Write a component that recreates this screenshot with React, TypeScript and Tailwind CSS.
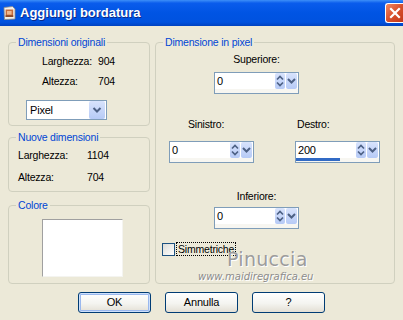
import React from 'react'

function UpDownButton() {
	return (
		<div className="h-[16px] w-[10px] rounded-[2px] bg-[linear-gradient(to_bottom,#d8e3fc,#b6caf6)]">
			<svg width="10" height="16" viewBox="0 0 10 16">
				<path d="M2 6.5 L5 3.5 L8 6.5" fill="none" stroke="#4d6185" strokeWidth="1.7" />
				<path d="M2 9.5 L5 12.5 L8 9.5" fill="none" stroke="#4d6185" strokeWidth="1.7" />
			</svg>
		</div>
	)
}

function DropButton({ w = 11, h = 16 }: { w?: number; h?: number }) {
	return (
		<div
			className="rounded-[2px] bg-[linear-gradient(to_bottom,#d8e3fc,#b6caf6)]"
			style={{ width: w, height: h }}
		>
			<svg width={w} height={h} viewBox={`0 0 ${w} ${h}`}>
				<path
					d={`M${w / 2 - 3.5} ${h / 2 - 2} L${w / 2} ${h / 2 + 1.5} L${w / 2 + 3.5} ${h / 2 - 2}`}
					fill="none"
					stroke="#4d6185"
					strokeWidth="2"
				/>
			</svg>
		</div>
	)
}

function SpinBox({ value, bar }: { value: string; bar?: boolean }) {
	return (
		<div className="flex h-[22px] w-[85px] flex-col border border-[#7f9db9] bg-white">
			<div className="flex h-[16px] pr-[1px]">
				<div className="flex-1 pl-[2px] text-[11px] leading-[16px]">{value}</div>
				<UpDownButton />
				<div className="ml-[1px]">
					<DropButton />
				</div>
			</div>
			<div className="flex-1 bg-[#f7f6f1]">
				{bar && <div className="h-[3px] w-[44px] bg-[#316ac5]" />}
			</div>
		</div>
	)
}

function XpButton({ label, isDefault }: { label: string; isDefault?: boolean }) {
	return (
		<button
			className={`h-[21px] w-[73px] rounded-[3px] border border-[#003c74] bg-[linear-gradient(to_bottom,#ffffff,#f4f4f0_55%,#e3dfd4)] text-[11px] font-normal leading-[19px] ${
				isDefault ? 'shadow-[inset_0_0_0_1px_#cee0fb,inset_0_0_0_2px_#9ab8ee]' : ''
			}`}
		>
			{label}
		</button>
	)
}

function TitleBar() {
	return (
		<div className="flex h-[26px] items-center bg-[linear-gradient(to_bottom,#3d8ff8,#0a5cec_12%,#0054e3_50%,#0052df_85%,#0042c0)]">
			<svg className="ml-[3px]" width="13" height="14" viewBox="0 0 13 14">
				<path d="M1 1.5 L9.5 0.5 L12 3 L12 13 L1.5 13.5 Z" fill="#f4f1ea" stroke="#8a8a8a" strokeWidth="0.8" />
				<rect x="2.6" y="3.5" width="7.6" height="7.5" fill="#c46c3c" />
				<rect x="4" y="5" width="4.6" height="3.6" fill="#f0b78c" />
				<rect x="2.6" y="9.2" width="7.6" height="1.8" fill="#8d4a2a" />
			</svg>
			<span className="ml-[4px] font-['Liberation_Sans',Arial,sans-serif] text-[13px] font-bold tracking-[0px] text-white [text-shadow:1px_1px_0_#0a2a8a]">
				Aggiungi bordatura
			</span>
			<div className="ml-auto mt-[-1px] flex h-[20px] w-[18px] items-center justify-center rounded-l-[3px] border border-r-0 border-white bg-[linear-gradient(135deg,#f08a66,#d9502c_50%,#c2381a)]">
				<svg width="12" height="12" viewBox="0 0 12 12">
					<path d="M2 2 L10 10 M10 2 L2 10" stroke="#ffffff" strokeWidth="2.2" strokeLinecap="square" />
				</svg>
			</div>
		</div>
	)
}

const fieldsetCls = 'rounded-[4px] border border-[#d0d0bf]'
const legendCls = 'ml-[7px] px-[2px] leading-[13px] text-[#0046d5]'

export default function App() {
	return (
		<div className="h-[320px] w-[403px] overflow-hidden bg-[#ece9d8] font-['Liberation_Sans',Arial,sans-serif] text-[10.5px] tracking-[-0.2px] text-black">
			<TitleBar />
			<div className="relative px-[8px] pt-[10px]">
				<div className="flex gap-[5px]">
					{/* left column */}
					<div className="flex w-[142px] flex-col">
						<fieldset className={`${fieldsetCls} pb-[5px]`}>
							<legend className={legendCls}>Dimensioni originali</legend>
							<div className="grid grid-cols-[56px_auto] gap-y-[7px] pl-[33px] pt-[6px] leading-[13px]">
								<span>Larghezza:</span>
								<span>904</span>
								<span>Altezza:</span>
								<span>704</span>
							</div>
							<div className="ml-[17px] mt-[12px] flex h-[20px] w-[81px] items-center border border-[#7f9db9] bg-white pr-[1px]">
								<span className="flex-1 pl-[3px] text-[11px]">Pixel</span>
								<DropButton w={16} h={18} />
							</div>
						</fieldset>

						<fieldset className={`${fieldsetCls} mt-[5px] pb-[7px]`}>
							<legend className={legendCls}>Nuove dimensioni</legend>
							<div className="grid grid-cols-[69px_auto] gap-y-[9px] pl-[9px] pt-[5px] leading-[13px]">
								<span>Larghezza:</span>
								<span>1104</span>
								<span>Altezza:</span>
								<span>704</span>
							</div>
						</fieldset>

						<fieldset className={`${fieldsetCls} mt-[7px] pb-[6px]`}>
							<legend className={legendCls}>Colore</legend>
							<div className="ml-[33px] mt-[7px] h-[58px] w-[81px] border border-t-[#a0a0a0] border-l-[#a0a0a0] border-r-[#f4f4f0] border-b-[#f4f4f0] bg-white" />
						</fieldset>
					</div>

					{/* right column */}
					<fieldset className={`${fieldsetCls} w-[240px]`}>
						<legend className={legendCls}>Dimensione in pixel</legend>
						<div className="ml-[58px] w-[85px] pt-[4px]">
							<div className="text-center leading-[13px]">Superiore:</div>
							<div className="mt-[6px]">
								<SpinBox value="0" />
							</div>
						</div>

						<div className="ml-[13px] mt-[24px] flex gap-[41px]">
							<div className="w-[85px]">
								<div className="pl-[19px] leading-[13px]">Sinistro:</div>
								<div className="mt-[10px]">
									<SpinBox value="0" />
								</div>
							</div>
							<div className="w-[85px]">
								<div className="pl-[2px] leading-[13px]">Destro:</div>
								<div className="mt-[10px]">
									<SpinBox value="200" bar />
								</div>
							</div>
						</div>

						<div className="ml-[58px] mt-[27px] w-[85px]">
							<div className="text-center leading-[13px]">Inferiore:</div>
							<div className="mt-[4px]">
								<SpinBox value="0" />
							</div>
						</div>

						<div className="ml-[6px] mt-[13px] flex items-center">
							<div className="h-[13px] w-[13px] border border-[#1c5180] bg-[linear-gradient(135deg,#dcdcd7,#ffffff)]" />
							<span className="ml-[1px] border border-dotted border-black px-[1px] leading-[12px]">
								Simmetriche
							</span>
						</div>
					</fieldset>
				</div>

				<div className="mt-[8px] flex justify-center gap-[14px]">
					<XpButton label="OK" isDefault />
					<XpButton label="Annulla" />
					<XpButton label="?" />
				</div>

				{/* watermark */}
				<div className="pointer-events-none absolute left-[227px] top-[224px] font-['DejaVu_Sans',sans-serif] text-[19px] leading-none tracking-[0.3px] text-[#9c9c9c] [text-shadow:1px_1px_0_#ffffff]">
					Pinuccia
				</div>
				<div className="pointer-events-none absolute left-[198px] top-[246px] font-['DejaVu_Sans',sans-serif] text-[10px] italic leading-none tracking-[0px] text-[#8c8c8c] [text-shadow:1px_1px_0_#ffffff]">
					www.maidiregrafica.eu
				</div>
			</div>
		</div>
	)
}
